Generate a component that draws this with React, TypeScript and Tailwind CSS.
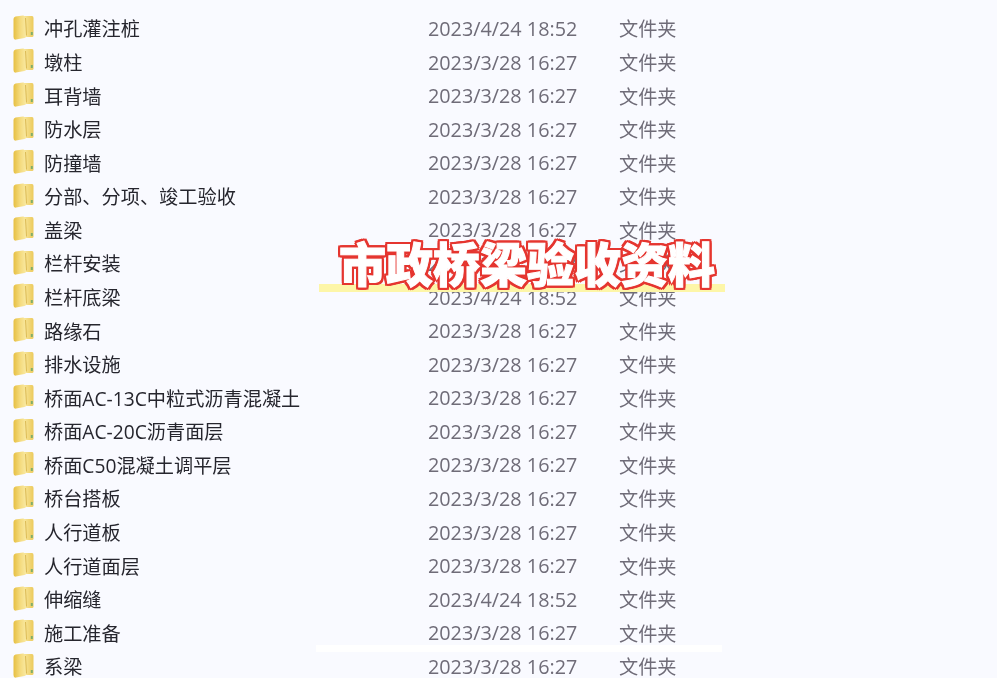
const rows = [
  ["冲孔灌注桩", "2023/4/24 18:52"],
  ["墩柱", "2023/3/28 16:27"],
  ["耳背墙", "2023/3/28 16:27"],
  ["防水层", "2023/3/28 16:27"],
  ["防撞墙", "2023/3/28 16:27"],
  ["分部、分项、竣工验收", "2023/3/28 16:27"],
  ["盖梁", "2023/3/28 16:27"],
  ["栏杆安装", "2023/3/28 16:27"],
  ["栏杆底梁", "2023/4/24 18:52"],
  ["路缘石", "2023/3/28 16:27"],
  ["排水设施", "2023/3/28 16:27"],
  ["桥面AC-13C中粒式沥青混凝土", "2023/3/28 16:27"],
  ["桥面AC-20C沥青面层", "2023/3/28 16:27"],
  ["桥面C50混凝土调平层", "2023/3/28 16:27"],
  ["桥台搭板", "2023/3/28 16:27"],
  ["人行道板", "2023/3/28 16:27"],
  ["人行道面层", "2023/3/28 16:27"],
  ["伸缩缝", "2023/4/24 18:52"],
  ["施工准备", "2023/3/28 16:27"],
  ["系梁", "2023/3/28 16:27"],
];

function FolderIcon() {
  return (
    <svg width="21" height="25" viewBox="0 0 21 25" className="shrink-0 mb-[3px]">
      <defs>
        <linearGradient id="back" x1="0" y1="0" x2="1" y2="0">
          <stop offset="0" stopColor="#f8e69a" />
          <stop offset="1" stopColor="#ecca5c" />
        </linearGradient>
        <linearGradient id="front" x1="0" y1="0" x2="1" y2="0">
          <stop offset="0" stopColor="#e6bf42" />
          <stop offset="0.5" stopColor="#f4da7c" />
          <stop offset="1" stopColor="#f9eaa4" />
        </linearGradient>
      </defs>
      <path d="M11 1 L19 1 Q20.5 1 20.5 3 L20.5 20.5 Q20.5 22 19 22 L11 22 Z" fill="url(#back)" />
      <path d="M0.5 4 Q0.5 2 2.5 1.5 L10 0.5 Q12 0.2 12.5 3 L13.5 20.5 Q13.5 22.5 11.5 23 L3 24.6 Q0.5 25 0.5 22 Z" fill="url(#front)" />
      <path d="M12.5 3 L13.5 20.5" stroke="#d0a838" strokeWidth="0.7" fill="none" />
      <rect x="17.8" y="17" width="2" height="3" fill="#7fae6a" />
    </svg>
  );
}

export default function App() {
  return (
    <div className="relative w-[997px] h-[678px] overflow-hidden bg-[#f9faff] font-['Noto_Sans_CJK_SC','Liberation_Sans',sans-serif]">
      <div className="flex flex-col pt-[12px] pl-[13px] blur-[0.5px]">
        {rows.map(([name, date], i) => (
          <div key={i} className="flex items-center h-[33.58px] shrink-0 text-[19.2px] whitespace-nowrap">
            <FolderIcon />
            <span className="w-[394px] pl-[10px] pt-[2px] text-[#26262e] font-['Open_Sans','Noto_Sans_CJK_SC',sans-serif]">{name}</span>
            <span className="w-[191px] text-[19.8px] text-[#6f6c78] font-['Open_Sans','Noto_Sans_CJK_SC',sans-serif]">{date}</span>
            <span className="text-[#6f6c78]">文件夹</span>
          </div>
        ))}
      </div>

      <div className="absolute left-[319px] top-[284px] w-[406px] h-[8px] bg-[#fdf6a8]" />
      <div className="absolute left-[316px] top-[645px] w-[406px] h-[7px] bg-white" />
      <div className="absolute left-[339px] top-[230px] text-[47px] leading-[64px] font-black whitespace-nowrap text-white [-webkit-text-stroke:1px_#ffffff] [filter:drop-shadow(2px_0_0_#e5352f)_drop-shadow(-2px_0_0_#e5352f)_drop-shadow(0_2px_0_#e5352f)_drop-shadow(0_-2px_0_#e5352f)]">
        市政桥梁验收资料
      </div>
    </div>
  );
}
